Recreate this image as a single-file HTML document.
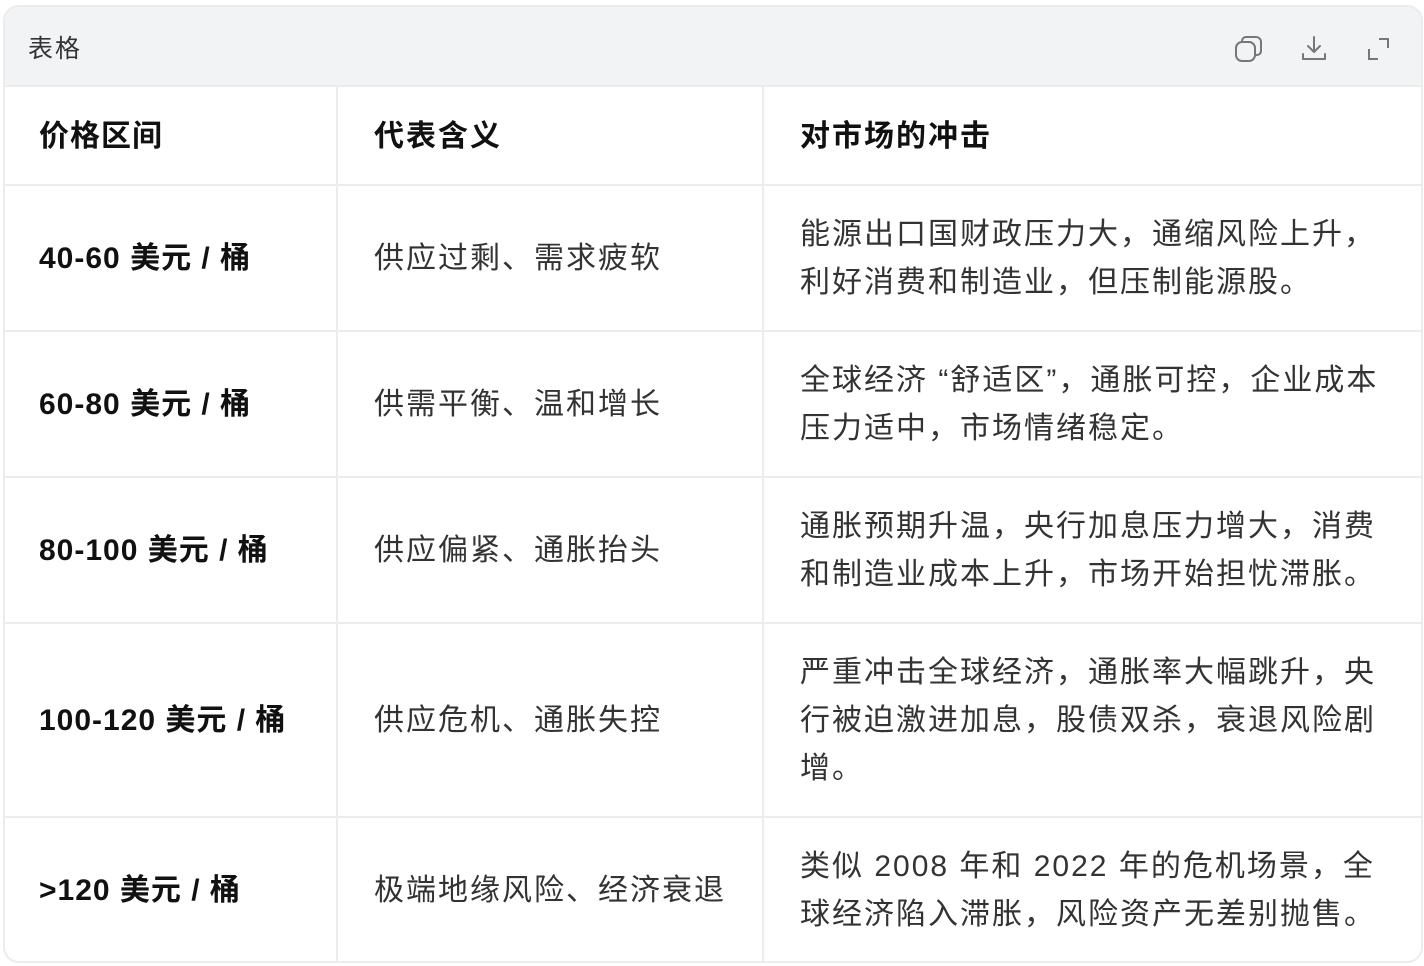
<!DOCTYPE html>
<html><head><meta charset="utf-8"><style>
*{margin:0;padding:0;box-sizing:border-box}
body{width:1424px;height:966px;background:#fff;font-family:"Liberation Sans","Noto Sans CJK SC",sans-serif;overflow:hidden}
.card{position:absolute;left:3px;top:5px;width:1420px;height:958px;border:2px solid #ececec;border-radius:16px;overflow:hidden}
.hd{height:80px;background:#f2f3f5;border-bottom:2px solid #ececec;position:relative}
.hd .t{position:absolute;left:23px;top:22px;font-size:25px;letter-spacing:2px;color:#333}
.ic{position:absolute;top:28px}
table{border-collapse:collapse;width:1420px;table-layout:fixed;margin-left:-2px}
td{border:2px solid #ececec;padding:2px 36px 0 36px;font-size:30px;letter-spacing:2px;line-height:48px;color:#333;vertical-align:middle}
td:last-child{padding-right:30px}
td:first-child{white-space:nowrap;letter-spacing:1px}
tr td:first-child{border-left:none}
tr td:last-child{border-right:none}
tr:first-child td{border-top:none}
.b{font-weight:bold;color:#111}
</style></head><body>
<div class="card">
<div class="hd"><span class="t">表格</span>
<svg class="ic" style="left:1229px" width="30" height="30" viewBox="0 0 30 30" fill="none" stroke="#777" stroke-width="2"><rect x="2" y="7" width="19" height="19" rx="6"/><path d="M8 7V6a4 4 0 0 1 4-4h10a5 5 0 0 1 5 5v9a4 4 0 0 1-4 4h-2"/></svg>
<svg class="ic" style="left:1295px" width="30" height="30" viewBox="0 0 30 30" fill="none" stroke="#777" stroke-width="2" stroke-linecap="round" stroke-linejoin="round"><path d="M14 2v15M8 11l6 6 6-6M3 19v5h22v-5"/></svg>
<svg class="ic" style="left:1360px" width="30" height="30" viewBox="0 0 30 30" fill="none" stroke="#777" stroke-width="2"><path d="M14 4h9v9M4 14v10h9"/></svg>
</div>
<table>
<colgroup><col style="width:334px"><col style="width:426px"><col style="width:660px"></colgroup>
<tr style="height:98px"><td class="b">价格区间</td><td class="b">代表含义</td><td class="b">对市场的冲击</td></tr>
<tr style="height:146px"><td class="b">40-60 美元 / 桶</td><td>供应过剩、需求疲软</td><td>能源出口国财政压力大，通缩风险上升，利好消费和制造业，但压制能源股。</td></tr>
<tr style="height:146px"><td class="b">60-80 美元 / 桶</td><td>供需平衡、温和增长</td><td>全球经济 “舒适区”，通胀可控，企业成本压力适中，市场情绪稳定。</td></tr>
<tr style="height:146px"><td class="b">80-100 美元 / 桶</td><td>供应偏紧、通胀抬头</td><td>通胀预期升温，央行加息压力增大，消费和制造业成本上升，市场开始担忧滞胀。</td></tr>
<tr style="height:194px"><td class="b">100-120 美元 / 桶</td><td>供应危机、通胀失控</td><td>严重冲击全球经济，通胀率大幅跳升，央行被迫激进加息，股债双杀，衰退风险剧增。</td></tr>
<tr style="height:146px"><td class="b">&gt;120 美元 / 桶</td><td>极端地缘风险、经济衰退</td><td>类似 2008 年和 2022 年的危机场景，全球经济陷入滞胀，风险资产无差别抛售。</td></tr>
</table>
</div>
</body></html>
